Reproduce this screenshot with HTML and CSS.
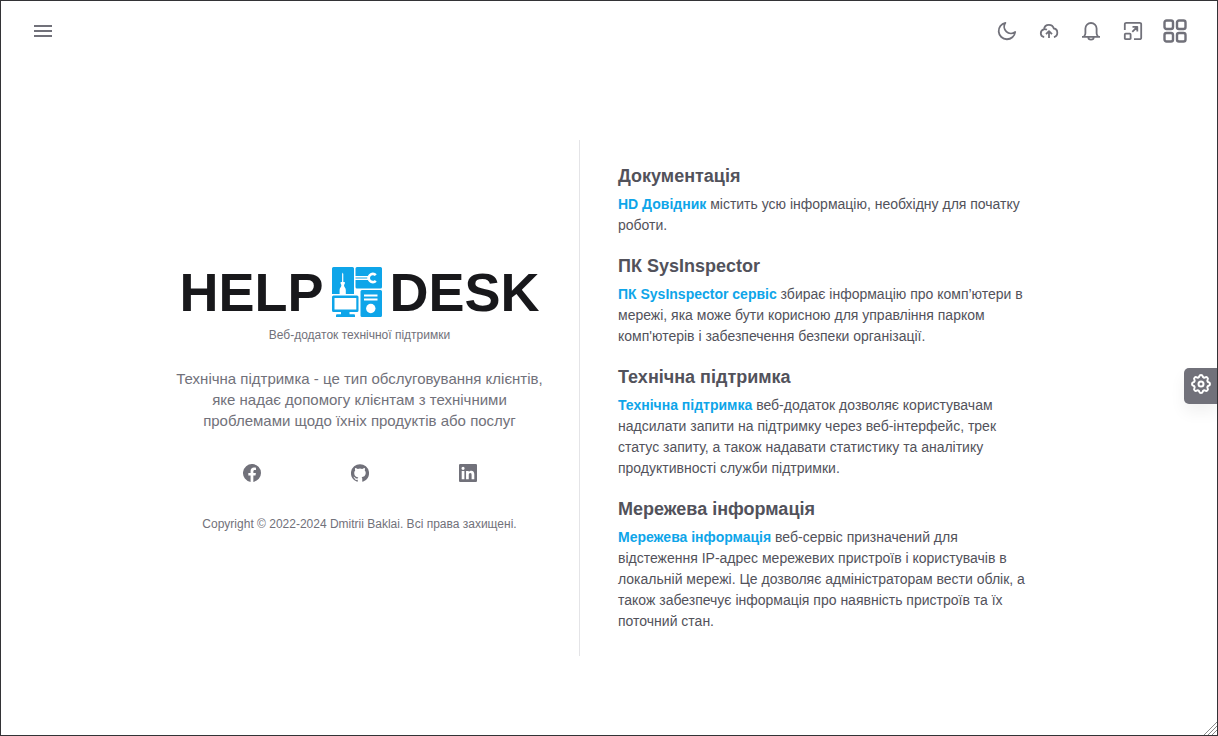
FILE: index.html
```html
<!DOCTYPE html>
<html lang="uk">
<head>
<meta charset="utf-8">
<title>HelpDesk</title>
<link rel="stylesheet" href="styles.css">
</head>
<body>
<div class="app">
  <header class="topbar">
    <button class="icon-button" type="button" aria-label="Меню">
      <svg class="icon" viewBox="0 0 20 20"><path d="M1 5h18M1 10h18M1 15h18"/></svg>
    </button>
    <nav class="tools" aria-label="Інструменти">
      <button class="icon-button" type="button" aria-label="Темна тема">
        <svg class="icon" viewBox="0 0 20 20"><path d="M8.400 1.800a6.800 6.800 0 0 0 9.800 9.200A8.300 8.300 0 1 1 8.400 1.800z"/></svg>
      </button>
      <button class="icon-button" type="button" aria-label="Завантажити">
        <svg class="icon" viewBox="0 0 20 20"><path d="M5.200 16.100C3 15.700 1.800 14.200 1.800 12.300c0-2 1.400-3.500 3.200-3.900C5.300 5.500 7.300 3.800 9.900 3.800c2.400 0 4.300 1.500 4.900 3.700 2.100.2 3.500 2 3.500 4.300 0 2.200-1.300 3.900-3.400 4.300M5 8.300c1.100-.2 2.100 0 2.900.5M10 17v-6.200M7 13.200l3-3 3 3"/></svg>
      </button>
      <button class="icon-button" type="button" aria-label="Сповіщення">
        <svg class="icon" viewBox="0 0 20 20"><path d="M1 15.800h18M3 15.300c1-.8 1.400-1.800 1.400-3V7.600a5.600 5.600 0 0 1 11.200 0v4.700c0 1.200.4 2.200 1.400 3M7.300 16.200a2.700 2.400 0 0 0 5.400 0"/></svg>
      </button>
      <button class="icon-button" type="button" aria-label="На весь екран">
        <svg class="icon" viewBox="0 0 20 20"><path d="M1.800 9V3.300a1.500 1.500 0 0 1 1.500-1.500h13.400a1.500 1.500 0 0 1 1.500 1.500v13.400a1.500 1.500 0 0 1-1.500 1.500H11M2.600 12.700h4.200a.8.8 0 0 1 .8.8v3.900a.8.8 0 0 1-.8.8H2.600a.8.8 0 0 1-.8-.8v-3.900a.8.8 0 0 1 .8-.8zM9.500 5.800h4.800v4.800M14.100 6l-4.800 4.800"/></svg>
      </button>
      <button class="icon-button" type="button" aria-label="Застосунки">
        <svg class="icon icon-large" viewBox="0 0 26 26"><rect x="2.500" y="2.500" width="8.500" height="8.500" rx="2"/><rect x="15" y="2.500" width="8.500" height="8.500" rx="2"/><rect x="2.500" y="15" width="8.500" height="8.500" rx="2"/><rect x="15" y="15" width="8.500" height="8.500" rx="2"/></svg>
      </button>
    </nav>
  </header>

  <main class="content">
    <div class="panel">
      <section class="about">
        <h1 class="brand">
          <span>HELP</span>
          <svg class="brand-mark" viewBox="0 0 50 50" aria-hidden="true">
            <path class="tile" d="M1.500 0H20.500Q22 0 22 1.500V27H0V1.500Q0 0 1.500 0zM25 0h23.500Q50 0 50 1.500V20q0 1.500-1.500 1.500H25Q23.500 21.500 23.500 20V1.500Q23.500 0 25 0zM30 23h18.500q1.500 0 1.500 1.500v24q0 1.500-1.500 1.500H30q-1.500 0-1.500-1.500v-24Q28.500 23 30 23z"/>
            <path class="cut" d="M10.700 5.500l.6 1.500v8h1.500v1.800l-.8 1.200c0 2.400 1.800 2.400 1.800 5V27H7.600v-4c0-2.600 1.800-2.600 1.800-5l-.8-1.200V15h1.500V7zM23 9h14v4H23z"/>
            <path class="tile" d="M23.500 10.500h12v1h-12z"/>
            <path class="jaw" d="M43.800 8.200A4.100 4.100 0 1 0 43.800 13.800"/>
            <path class="tile" d="M1.500 28.500H25q1.500 0 1.500 1.500v13.500q0 1.500-1.500 1.500h-7.500v2.300H22q1 0 1 1.200V50H4v-1.500q0-1.200 1-1.200h4V45H1.500Q0 45 0 43.500V30q0-1.500 1.500-1.500z"/>
            <path class="cut" d="M2.500 31h21.800v11.500H2.500zM32 27.500h13.500v2H32zM32 31.500h13.500v2H32z"/>
            <circle class="cut" cx="38.800" cy="41.500" r="4.700"/>
          </svg>
          <span>DESK</span>
        </h1>
        <p class="tagline">Веб-додаток технічної підтримки</p>
        <p class="summary">Технічна підтримка - це тип обслуговування клієнтів, яке надає допомогу клієнтам з технічними проблемами щодо їхніх продуктів або послуг</p>
        <div class="social">
          <a href="#" aria-label="Facebook"><svg class="social-icon" viewBox="0 0 24 24"><path d="M24 12a12 12 0 1 0-13.900 11.850v-8.400H7.100V12h3V9.400c0-3 1.800-4.700 4.500-4.700 1.300 0 2.700.250 2.700.250v2.950h-1.500c-1.500 0-2 .930-2 1.880V12h3.400l-.550 3.450h-2.850v8.400A12 12 0 0 0 24 12z"/></svg></a>
          <a href="#" aria-label="GitHub"><svg class="social-icon" viewBox="0 0 24 24"><path d="M12 .3a12 12 0 0 0-3.800 23.400c.6.100.8-.3.800-.6v-2c-3.300.7-4-1.600-4-1.600-.6-1.400-1.400-1.800-1.400-1.800-1-.7.100-.7.100-.7 1.200 0 1.900 1.200 1.900 1.200 1 1.800 2.800 1.300 3.500 1 0-.8.400-1.300.7-1.600-2.700-.3-5.500-1.300-5.500-6 0-1.200.5-2.300 1.300-3.100-.2-.4-.6-1.600 0-3.200 0 0 1-.3 3.400 1.200a11.500 11.500 0 0 1 6 0c2.300-1.500 3.300-1.200 3.300-1.200.6 1.600.2 2.800 0 3.200.9.800 1.300 1.900 1.300 3.200 0 4.600-2.800 5.600-5.500 5.900.5.400.9 1 .9 2.200v3.300c0 .3.100.7.800.6A12 12 0 0 0 12 .3z"/></svg></a>
          <a href="#" aria-label="LinkedIn"><svg class="social-icon" viewBox="0 0 24 24"><path fill-rule="evenodd" d="M1.500 0h21Q24 0 24 1.500v21q0 1.500-1.500 1.500h-21Q0 24 0 22.500v-21Q0 0 1.500 0zM3.600 9.300v11h3.600v-11zM5.400 3.700a2.100 2.100 0 1 0 0 4.200 2.100 2.100 0 0 0 0-4.200zM9.400 9.300v11H13v-5.700c0-1.500.5-2.600 2-2.600s1.800 1.200 1.800 2.700v5.600h3.600v-6.200c0-3.200-1.200-5-4-5-1.700 0-2.800.8-3.400 1.700V9.300z"/></svg></a>
        </div>
        <p class="copyright">Copyright © 2022-2024 Dmitrii Baklai. Всі права захищені.</p>
      </section>

      <section class="guide">
        <article>
          <h2>Документація</h2>
          <p><a href="#">HD Довідник</a> містить усю інформацію, необхідну для початку роботи.</p>
        </article>
        <article>
          <h2>ПК SysInspector</h2>
          <p><a href="#">ПК SysInspector сервіс</a> збирає інформацію про комп’ютери в мережі, яка може бути корисною для управління парком комп'ютерів і забезпечення безпеки організації.</p>
        </article>
        <article>
          <h2>Технічна підтримка</h2>
          <p><a href="#">Технічна підтримка</a> веб-додаток дозволяє користувачам надсилати запити на підтримку через веб-інтерфейс, трек статус запиту, а також надавати статистику та аналітику продуктивності служби підтримки.</p>
        </article>
        <article>
          <h2>Мережева інформація</h2>
          <p><a href="#">Мережева інформація</a> веб-сервіс призначений для відстеження IP-адрес мережевих пристроїв і користувачів в локальній мережі. Це дозволяє адміністраторам вести облік, а також забезпечує інформація про наявність пристроїв та їх поточний стан.</p>
        </article>
      </section>
    </div>
  </main>

  <button class="settings" type="button" aria-label="Налаштування">
    <svg class="icon settings-icon" viewBox="2 2 20 20"><path d="M10.325 4.317c.426-1.756 2.924-1.756 3.350 0a1.724 1.724 0 0 0 2.573 1.066c1.543-.940 3.310.826 2.370 2.370a1.724 1.724 0 0 0 1.065 2.572c1.756.426 1.756 2.924 0 3.350a1.724 1.724 0 0 0-1.066 2.573c.940 1.543-.826 3.310-2.370 2.370a1.724 1.724 0 0 0-2.572 1.065c-.426 1.756-2.924 1.756-3.350 0a1.724 1.724 0 0 0-2.573-1.066c-1.543.940-3.310-.826-2.370-2.370a1.724 1.724 0 0 0-1.065-2.572c-1.756-.426-1.756-2.924 0-3.350a1.724 1.724 0 0 0 1.066-2.573c-.940-1.543.826-3.310 2.370-2.370 1 .608 2.296.070 2.572-1.065z"/><circle cx="12" cy="12" r="2.500"/></svg>
  </button>
  <svg class="grip" viewBox="0 0 14 14" aria-hidden="true"><path d="M1 14 14 1M5 14l9-9M9 14l5-5"/></svg>
</div>
</body>
</html>
```
FILE: styles.css
```css
* {
  box-sizing: border-box;
}

body {
  margin: 0;
  color: #52525b;
  background: #fff;
  font: 14px/21px "Liberation Sans", Arial, sans-serif;
}

h1, h2, p {
  margin: 0;
}

a {
  color: inherit;
  text-decoration: none;
}

.app {
  position: relative;
  display: flex;
  flex-direction: column;
  min-height: 100vh;
  border: 1px solid #333336;
}

.topbar {
  display: flex;
  align-items: center;
  justify-content: space-between;
  height: 60px;
  padding: 0 24px;
}

.tools {
  display: flex;
  align-items: center;
  gap: 6px;
}

.icon-button {
  display: grid;
  place-items: center;
  width: 36px;
  height: 36px;
  padding: 0;
  border: 0;
  color: #71717a;
  background: none;
  cursor: pointer;
}

.icon {
  width: 20px;
  height: 20px;
  fill: none;
  stroke: currentColor;
  stroke-width: 1.8;
  stroke-linejoin: round;
}

.icon-large {
  width: 26px;
  height: 26px;
  stroke-width: 2.4;
}

.content {
  display: flex;
  flex: 1;
  align-items: center;
  justify-content: center;
}

.panel {
  display: grid;
  grid-template-columns: 440px minmax(0, 1fr);
  width: 100%;
  max-width: 938px;
}

.about {
  display: flex;
  flex-direction: column;
  align-items: center;
  justify-content: center;
  padding: 0 24px;
  border-right: 1px solid #e4e4e7;
  color: #71717a;
  text-align: center;
}

.brand {
  display: flex;
  align-items: center;
  gap: 8px;
  color: #18181b;
  font-size: 54px;
  line-height: 58px;
}

.brand-mark {
  width: 50px;
  height: 50px;
}

.tile {
  fill: #0ea5e9;
}

.cut {
  fill: #fff;
}

.jaw {
  fill: none;
  stroke: #fff;
  stroke-width: 2.6;
}

.tagline {
  margin-top: 5px;
  font-size: 12px;
  line-height: 18px;
}

.summary {
  max-width: 380px;
  margin-top: 24px;
  font-size: 15px;
}

.social {
  display: grid;
  grid-template-columns: repeat(3, 108px);
  justify-items: center;
  margin-top: 32px;
}

.social a {
  display: grid;
  place-items: center;
  height: 20px;
}

.social-icon {
  width: 18px;
  height: 18px;
  fill: #71717a;
}

.copyright {
  margin-top: 32px;
  font-size: 12px;
  line-height: 18px;
}

.guide {
  display: grid;
  gap: 18px;
  padding: 24px 38px;
}

.guide h2 {
  margin-bottom: 6px;
  font-size: 18px;
  line-height: 24px;
}

.guide a {
  color: #0ea5e9;
  font-weight: 700;
}

.settings {
  position: absolute;
  top: 367px;
  right: 0;
  display: grid;
  place-items: center;
  width: 33px;
  height: 36px;
  padding: 0 0 4px;
  border: 0;
  border-radius: 5px 0 0 5px;
  color: #fff;
  background: #71717a;
  box-shadow: 0 8px 16px rgb(0 0 0 / 6%);
  cursor: pointer;
}

.settings-icon {
  stroke-width: 2;
}

.grip {
  position: absolute;
  right: 0;
  bottom: 0;
  width: 14px;
  height: 14px;
  fill: none;
  stroke: #8a8a8a;
  stroke-width: 1;
}
```
